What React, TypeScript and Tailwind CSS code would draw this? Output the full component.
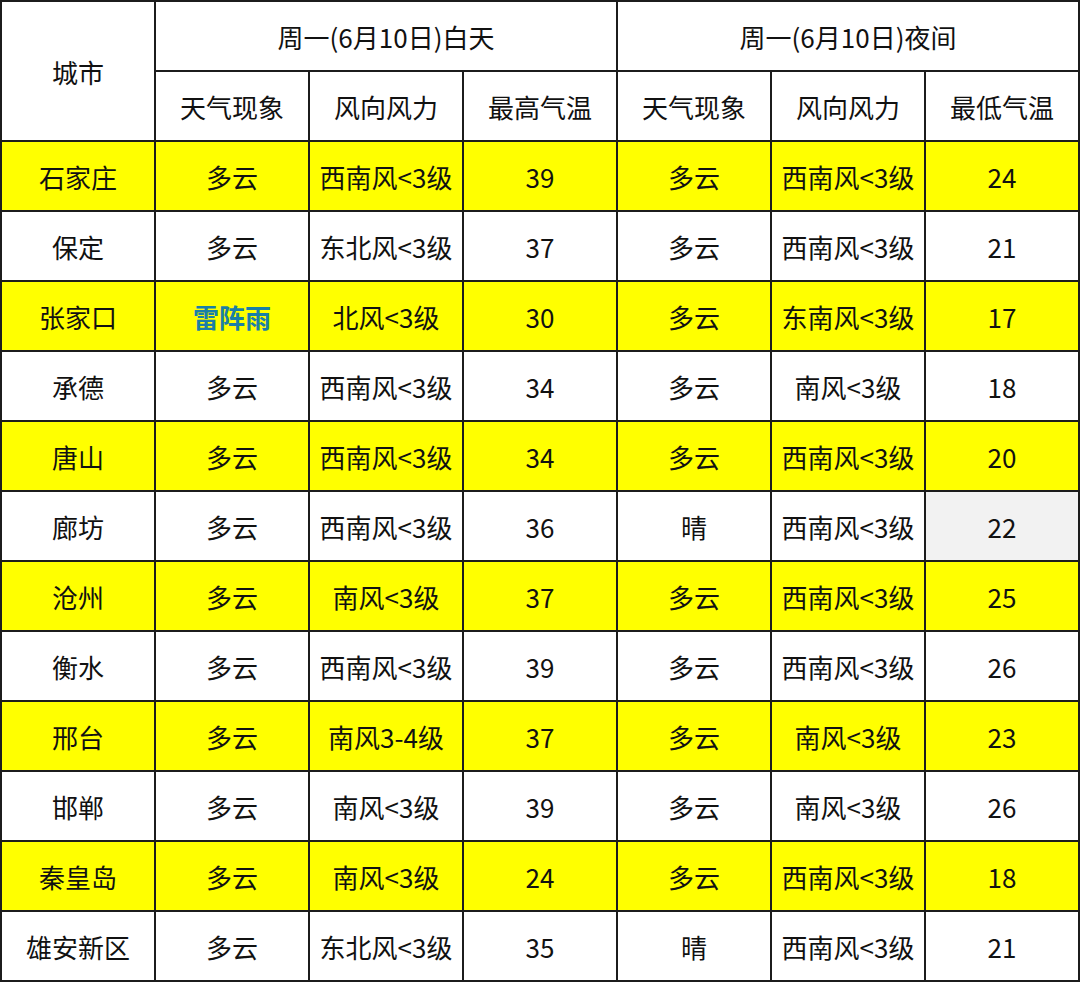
const rows: string[][] = [
  ["石家庄", "多云", "西南风<3级", "39", "多云", "西南风<3级", "24"],
  ["保定", "多云", "东北风<3级", "37", "多云", "西南风<3级", "21"],
  ["张家口", "雷阵雨", "北风<3级", "30", "多云", "东南风<3级", "17"],
  ["承德", "多云", "西南风<3级", "34", "多云", "南风<3级", "18"],
  ["唐山", "多云", "西南风<3级", "34", "多云", "西南风<3级", "20"],
  ["廊坊", "多云", "西南风<3级", "36", "晴", "西南风<3级", "22"],
  ["沧州", "多云", "南风<3级", "37", "多云", "西南风<3级", "25"],
  ["衡水", "多云", "西南风<3级", "39", "多云", "西南风<3级", "26"],
  ["邢台", "多云", "南风3-4级", "37", "多云", "南风<3级", "23"],
  ["邯郸", "多云", "南风<3级", "39", "多云", "南风<3级", "26"],
  ["秦皇岛", "多云", "南风<3级", "24", "多云", "西南风<3级", "18"],
  ["雄安新区", "多云", "东北风<3级", "35", "晴", "西南风<3级", "21"],
];

const cell = "flex items-center justify-center pt-[1px]";

export default function App() {
  return (
    <div
      className="w-[1080px] h-[982px] bg-[#1c1c1c] p-[2px] grid grid-cols-[repeat(7,152px)] auto-rows-[68px] gap-[2px] text-[26px] text-[#111]"
      style={{ fontFamily: '"Noto Sans CJK SC", "Noto Sans", sans-serif' }}
    >
      <div className={`${cell} bg-white row-span-2`}>城市</div>
      <div className={`${cell} bg-white col-span-3`}>周一(6月10日)白天</div>
      <div className={`${cell} bg-white col-span-3`}>周一(6月10日)夜间</div>
      {["天气现象", "风向风力", "最高气温", "天气现象", "风向风力", "最低气温"].map((h, i) => (
        <div key={i} className={`${cell} bg-white`}>{h}</div>
      ))}
      {rows.map((r, ri) => {
        const yellow = ri % 2 === 0;
        return r.map((v, ci) => {
          let bg = yellow ? "bg-[#ffff00]" : "bg-white";
          if (ri === 5 && ci === 6) bg = "bg-[#f2f2f2]";
          const blue = v === "雷阵雨";
          return (
            <div
              key={`${ri}-${ci}`}
              className={`${cell} ${bg} ${blue ? "text-[#1a7fa6] font-bold" : ""}`}
            >
              {v}
            </div>
          );
        });
      })}
    </div>
  );
}
